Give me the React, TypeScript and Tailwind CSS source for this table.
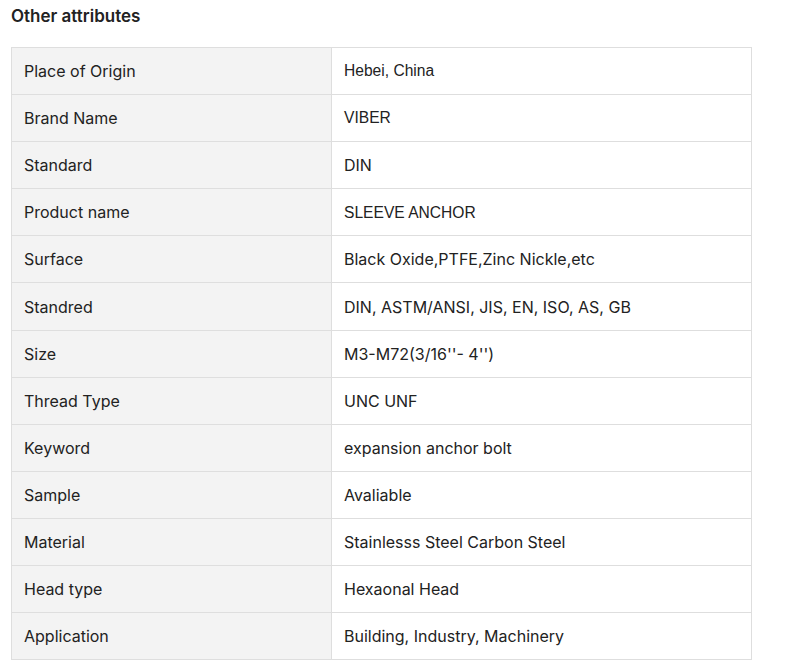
const rows: [string, string, boolean?][] = [
  ["Place of Origin", "Hebei, China", true],
  ["Brand Name", "VIBER", true],
  ["Standard", "DIN"],
  ["Product name", "SLEEVE ANCHOR", true],
  ["Surface", "Black Oxide,PTFE,Zinc Nickle,etc"],
  ["Standred", "DIN, ASTM/ANSI, JIS, EN, ISO, AS, GB"],
  ["Size", "M3-M72(3/16''- 4'')"],
  ["Thread Type", "UNC UNF"],
  ["Keyword", "expansion anchor bolt"],
  ["Sample", "Avaliable"],
  ["Material", "Stainlesss Steel Carbon Steel"],
  ["Head type", "Hexaonal Head"],
  ["Application", "Building, Industry, Machinery"],
];

export default function App() {
  return (
    <div className="bg-white px-[11px] pt-[4px] text-[#222] font-['Inter',sans-serif]">
      <h2 className="text-[17px] font-semibold leading-[24px] mb-[19px]">Other attributes</h2>
      <table className="w-[741px] border-collapse border border-[#dedede] text-[16px]">
        <tbody>
          {rows.map(([k, v, arial]) => (
            <tr key={k} className="h-[47.1px]">
              <td className="w-[320px] bg-[#f3f3f3] border border-[#dedede] px-3 align-middle">{k}</td>
              <td
                className={
                  "border border-[#dedede] px-3 align-middle " +
                  (arial ? "font-['Liberation_Sans',sans-serif] text-[15.6px] text-[#222]" : "")
                }
              >
                {v}
              </td>
            </tr>
          ))}
        </tbody>
      </table>
    </div>
  );
}
